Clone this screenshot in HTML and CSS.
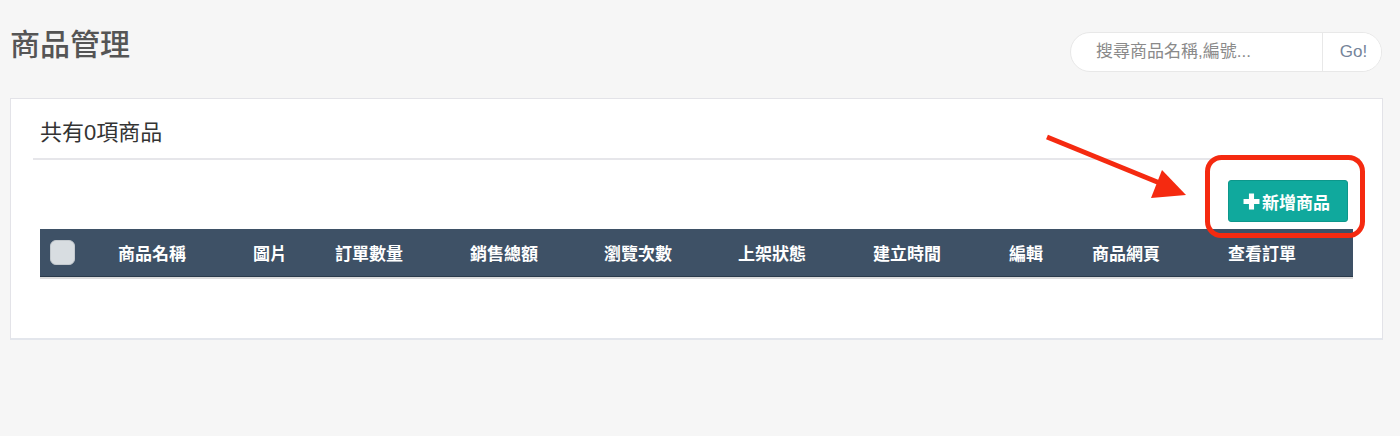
FILE: index.html
```html
<!DOCTYPE html>
<html lang="zh-Hant">
<head>
    <meta charset="UTF-8">
    <meta name="viewport" content="width=device-width, initial-scale=1.0">
    <title>商品管理</title>
    <link rel="stylesheet" href="styles.css">
</head>
<body>
    <div class="topbar">
        <h1 class="page_title">商品管理</h1>
        <form class="search">
            <input type="text" class="search_input" placeholder="搜尋商品名稱,編號...">
            <button type="button" class="search_go">Go!</button>
        </form>
    </div>

    <div class="panel">
        <h3 class="panel_title">共有0項商品</h3>

        <div class="toolbar">
            <button type="button" class="btn_add">
                <svg class="plus" viewBox="0 0 16 16" width="17" height="17"><path d="M5.6 0.5h4.8v5.1h5.1v4.8h-5.1v5.1H5.6v-5.1H0.5V5.6h5.1z" fill="#fff"/></svg>新增商品
            </button>
        </div>

        <div class="product_table">
            <div class="thead">
                <div class="th th_check"><span class="checkbox"></span></div>
                <div class="th">商品名稱</div>
                <div class="th">圖片</div>
                <div class="th">訂單數量</div>
                <div class="th">銷售總額</div>
                <div class="th">瀏覽次數</div>
                <div class="th">上架狀態</div>
                <div class="th">建立時間</div>
                <div class="th">編輯</div>
                <div class="th">商品網頁</div>
                <div class="th">查看訂單</div>
            </div>
        </div>

        <!-- annotation drawn over the screenshot -->
        <svg class="annotation" width="340" height="110" viewBox="0 0 340 110">
            <line x1="8" y1="9" x2="128" y2="58" stroke="#f52a10" stroke-width="5"/>
            <polygon points="123,42 112,70 147,67" fill="#f52a10"/>
            <rect x="168.5" y="29.5" width="155" height="78" rx="14" fill="none" stroke="#f52a10" stroke-width="5"/>
        </svg>
    </div>
</body>
</html>
```

FILE: styles.css
```css
body {
    font-family: "Liberation Sans", "Noto Sans CJK TC", sans-serif;
    margin: 0;
    padding: 0;
    background-color: #f6f6f6;
    color: #333;
}
.topbar {
    display: flex;
    justify-content: space-between;
    align-items: flex-start;
    padding: 30px 18px 0 10px;
    height: 68px;
}
.page_title {
    margin: 0;
    font-size: 30px;
    line-height: 30px;
    font-weight: 500;
    color: #555;
}
.search {
    display: flex;
    margin-top: 2px;
    height: 40px;
    width: 312px;
    box-sizing: border-box;
    border: 1px solid #e8e8e8;
    border-radius: 20px;
    background: #fff;
    overflow: hidden;
}
.search_input {
    flex: 1;
    border: 0;
    outline: none;
    padding: 0 0 0 25px;
    font-family: inherit;
    font-size: 17px;
    background: transparent;
}
.search_input::placeholder {
    color: #8a8a8a;
}
.search_go {
    width: 59px;
    border: 0;
    border-left: 1px solid #e8e8e8;
    background: #fff;
    color: #75849a;
    font-family: inherit;
    font-size: 17px;
    padding: 0 0 0 3px;
}
.panel {
    position: relative;
    margin: 0 17px 0 10px;
    padding: 0 22px 59px;
    background: #fff;
    border: 1px solid #e3e3e8;
    border-bottom: 2px solid #e3e6ec;
}
.panel_title {
    margin: 0;
    padding: 19px 7px 10px;
    font-size: 22px;
    line-height: 30px;
    font-weight: 400;
    color: #333;
    border-bottom: 2px solid #e6e6ea;
}
.toolbar {
    display: flex;
    justify-content: flex-end;
    padding: 20px 12px 7px 0;
}
.btn_add {
    display: flex;
    align-items: center;
    gap: 2px;
    height: 42px;
    width: 120px;
    padding: 0 0 0 14px;
    box-sizing: border-box;
    background: #10a99d;
    border: 1px solid #0d978b;
    border-radius: 3px;
    color: #fff;
    font-family: inherit;
    font-size: 17px;
    font-weight: 700;
}
.plus {
    flex: none;
}
.product_table {
    margin: 0 7px;
    border-bottom: 2px solid #dcdcdc;
}
.thead {
    display: grid;
    grid-template-columns: 78px 135px 82px 135px 134px 134px 135px 136px 83px 136px 1fr;
    align-items: center;
    height: 47px;
    background: #3e5166;
    border-bottom: 1px solid #2a3a4b;
    color: #fff;
    font-size: 17px;
    font-weight: 700;
}
.th_check {
    padding-left: 10px;
    display: flex;
}
.checkbox {
    width: 25px;
    height: 25px;
    box-sizing: border-box;
    border-radius: 6px;
    background: #d8dde1;
    border: 1px solid #c3c9ce;
}
.annotation {
    position: absolute;
    left: 1028px;
    top: 29px;
}
```
